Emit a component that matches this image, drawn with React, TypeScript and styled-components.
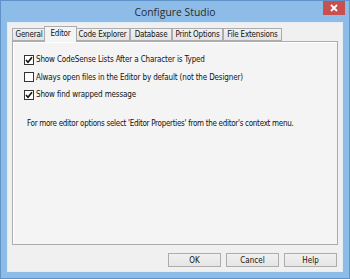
import React from "react";
import styled, { createGlobalStyle } from "styled-components";

const Global = createGlobalStyle`
  html, body { margin: 0; padding: 0; background: #fff; }
  * { box-sizing: border-box; }
`;

const UI_FONT = `"DejaVu Sans Condensed", "Liberation Sans", Arial, sans-serif`;

const Window = styled.div`
  width: 350px;
  height: 279px;
  background: #8dbce9;
  border: 1px solid #5f93c8;
  display: flex;
  flex-direction: column;
  font-family: ${UI_FONT};
  overflow: hidden;
`;

const TitleBar = styled.div`
  height: 21px;
  flex: none;
  position: relative;
  display: flex;
  align-items: center;
  justify-content: center;
`;

const Title = styled.div`
  font-family: "Open Sans", "Liberation Sans", sans-serif;
  font-size: 10.4px;
  color: #2b2b2b;
  margin-top: 1px;
`;

const CloseButton = styled.div`
  position: absolute;
  right: 4px;
  top: -1px;
  width: 22px;
  height: 15px;
  background: #c75050;
  display: flex;
  align-items: center;
  justify-content: center;
`;

const Client = styled.div`
  flex: 1;
  margin: 0 6px 6px 6px;
  background: #f0f0f0;
  border: 1px solid #e4ecf5;
  padding: 3px 4px 0 4px;
  display: flex;
  flex-direction: column;
`;

const TabStrip = styled.div`
  display: flex;
  align-items: flex-end;
  height: 15px;
  flex: none;
  position: relative;
  z-index: 1;
`;

const Tab = styled.div<{ $active?: boolean; $w: number }>`
  width: ${(p) => p.$w}px;
  height: ${(p) => (p.$active ? 16 : 13)}px;
  margin: ${(p) => (p.$active ? "0 -2px -1px -2px" : "0")};
  background: ${(p) =>
    p.$active ? "#f4f4f4" : "linear-gradient(#f2f2f2, #e4e4e4)"};
  border: 1px solid #acacac;
  border-bottom: ${(p) => (p.$active ? "none" : "1px solid #acacac")};
  position: relative;
  z-index: ${(p) => (p.$active ? 2 : 1)};
  font-size: 8px;
  color: #111;
  display: flex;
  align-items: ${(p) => (p.$active ? "flex-start" : "center")};
  padding-top: ${(p) => (p.$active ? "2px" : "0")};
  justify-content: center;
  white-space: nowrap;
  letter-spacing: -0.2px;
`;

const Panel = styled.div`
  height: 204px;
  width: 326px;
  flex: none;
  background: #f4f4f4;
  border: 1px solid #acacac;
  box-shadow: inset 1px 1px 0 #ffffff;
  padding: 9px 0 0 11px;
  display: flex;
  flex-direction: column;
`;

const CheckRow = styled.label`
  display: flex;
  align-items: center;
  height: 17.5px;
  font-size: 8px;
  color: #111;
  letter-spacing: -0.15px;
  gap: 2px;
`;

const Box = styled.span`
  width: 10px;
  height: 10px;
  border: 1px solid #333;
  background: #fff;
  display: flex;
  align-items: center;
  justify-content: center;
  flex: none;
`;

const Note = styled.div`
  margin-top: 15px;
  margin-left: 3px;
  font-size: 8px;
  color: #111;
  letter-spacing: -0.3px;
`;

const ButtonRow = styled.div`
  display: flex;
  justify-content: flex-end;
  gap: 5px;
  margin-top: 8px;
  padding-right: 1px;
`;

const Button = styled.div`
  width: 53px;
  height: 14px;
  border: 1px solid #acacac;
  background: linear-gradient(#f0f0f0, #e5e5e5);
  font-size: 8px;
  color: #111;
  display: flex;
  align-items: center;
  justify-content: center;
`;

const Check = () => (
  <svg width="8" height="8" viewBox="0 0 8 8">
    <path d="M1 4 L3 6.2 L7 1.2" stroke="#111" strokeWidth="1.6" fill="none" />
  </svg>
);

const tabs: [string, number][] = [
  ["General", 34],
  ["Editor", 33],
  ["Code Explorer", 55],
  ["Database", 42],
  ["Print Options", 51],
  ["File Extensions", 59],
];

export default function App() {
  return (
    <>
      <Global />
      <Window>
        <TitleBar>
          <Title>Configure Studio</Title>
          <CloseButton>
            <svg width="8" height="8" viewBox="0 0 8 8">
              <path d="M1 1 L7 7 M7 1 L1 7" stroke="#fff" strokeWidth="1.8" />
            </svg>
          </CloseButton>
        </TitleBar>
        <Client>
          <TabStrip>
            {tabs.map(([t, w]) => (
              <Tab key={t} $w={w} $active={t === "Editor"}>
                {t}
              </Tab>
            ))}
          </TabStrip>
          <Panel>
            <CheckRow>
              <Box>
                <Check />
              </Box>
              Show CodeSense Lists After a Character is Typed
            </CheckRow>
            <CheckRow>
              <Box />
              Always open files in the Editor by default (not the Designer)
            </CheckRow>
            <CheckRow>
              <Box>
                <Check />
              </Box>
              Show find wrapped message
            </CheckRow>
            <Note>
              For more editor options select 'Editor Properties' from the editor's context menu.
            </Note>
          </Panel>
          <ButtonRow>
            <Button>OK</Button>
            <Button>Cancel</Button>
            <Button>Help</Button>
          </ButtonRow>
        </Client>
      </Window>
    </>
  );
}
